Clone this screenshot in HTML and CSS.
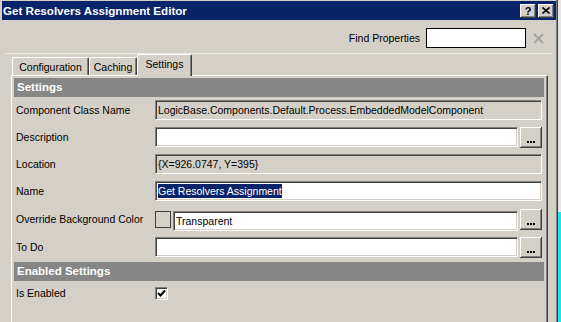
FILE: index.html
```html
<!DOCTYPE html>
<html>
<head>
<meta charset="utf-8">
<link rel="stylesheet" href="styles.css">
</head>
<body>
<div class="screen">
  <div class="window">
    <div class="titlebar">
      <span class="title">Get Resolvers Assignment Editor</span>
      <div class="tbtns">
        <span class="tbtn help">?</span>
        <span class="tbtn"><svg width="8" height="7" viewBox="0 0 8 7"><path d="M0.5 0.5 L7.5 6.5 M7.5 0.5 L0.5 6.5" stroke="#000" stroke-width="1.6" fill="none"/></svg></span>
      </div>
    </div>
    <div class="findbar">
      <span class="findlabel">Find Properties</span>
      <div class="findbox"></div>
      <svg class="clear" width="11" height="11" viewBox="0 0 11 11"><path d="M1 1 L10 10 M10 1 L1 10" stroke="#a4a4a4" stroke-width="2" fill="none"/></svg>
    </div>
    <div class="sep"></div>
    <div class="tabs">
      <div class="tab t-config">Configuration</div>
      <div class="tab t-cache">Caching</div>
      <div class="tab active">Settings</div>
    </div>
    <div class="panel">
      <div class="group">Settings</div>
      <div class="row">
        <div class="label">Component Class Name</div>
        <div class="field ro">LogicBase.Components.Default.Process.EmbeddedModelComponent</div>
      </div>
      <div class="row">
        <div class="label">Description</div>
        <div class="field"></div>
        <div class="dots"><span></span></div>
      </div>
      <div class="row">
        <div class="label">Location</div>
        <div class="field ro">{X=926.0747, Y=395}</div>
      </div>
      <div class="row">
        <div class="label">Name</div>
        <div class="field"><span class="sel">Get Resolvers Assignment</span></div>
      </div>
      <div class="row row-color">
        <div class="label">Override Background Color</div>
        <div class="swatch"></div>
        <div class="field">Transparent</div>
        <div class="dots"><span></span></div>
      </div>
      <div class="row row-todo">
        <div class="label">To Do</div>
        <div class="field"></div>
        <div class="dots"><span></span></div>
      </div>
      <div class="group">Enabled Settings</div>
      <div class="row row-check">
        <div class="label">Is Enabled</div>
        <div class="check"><svg width="9" height="9" viewBox="0 0 9 9"><path d="M1 4 L3.5 6.5 L8 1.5" stroke="#000" stroke-width="2" fill="none"/></svg></div>
      </div>
    </div>
  </div>
  <div class="edge"></div>
</div>
</body>
</html>
```
FILE: styles.css
```css
* { box-sizing: border-box; }
html, body { margin: 0; padding: 0; }
body {
  background: #d4d0c8;
  font-family: "Liberation Sans", Arial, sans-serif;
  font-size: 10.5px;
  color: #000;
  overflow: hidden;
}
.screen { display: flex; width: 561px; height: 322px; overflow: hidden; }
.window {
  width: 558px; height: 322px; flex: none;
  background: #d4d0c8;
  border-right: 1px solid #404040;
  box-shadow: inset -1px 0 #808080;
  padding: 1px 1px 0 2px;
  display: flex; flex-direction: column;
}
.edge { flex: 1; background: linear-gradient(#e6e6e6 0 212px, #22e4e4 212px); }
.titlebar {
  height: 19px; flex: none;
  background: #0a246a;
  display: flex; align-items: center; justify-content: space-between;
  padding: 0 2px 0 1px;
  color: #fff; font-weight: bold; font-size: 11.6px;
}
.tbtns { display: flex; gap: 2px; }
.tbtn {
  width: 16px; height: 14px;
  background: #d4d0c8;
  box-shadow: inset -1px -1px #404040, inset 1px 1px #fff, inset -2px -2px #808080;
  display: flex; align-items: center; justify-content: center;
  color: #000; font-size: 11px; font-weight: bold; line-height: 14px;
}
.findbar {
  height: 33px; flex: none;
  display: flex; align-items: center; justify-content: flex-end;
  padding: 3px 12px 0 0;
}
.findlabel { margin-right: 6px; }
.findbox { width: 100px; height: 20px; background: #fff; border: 1px solid #000; margin-right: 7px; }
.sep { height: 1px; flex: none; background: #eceae4; margin: 0 3px 0 3px; }
.tabs {
  height: 21px; flex: none;
  display: flex; align-items: flex-end;
  margin-left: 10px;
  position: relative; z-index: 1;
}
.tab {
  height: 18px;
  padding-top: 3px;
  text-align: center;
  border-left: 1px solid #fff; border-top: 1px solid #fff;
  border-right: 1px solid #404040;
  box-shadow: inset -1px 0 #808080;
  border-radius: 2px 2px 0 0;
}
.t-config { width: 77px; }
.t-cache { width: 48px; }
.tab.active {
  width: 55px;
  height: 22px; margin-bottom: -1px;
  padding-top: 3px;
  background: #d4d0c8;
}
.panel {
  flex: 1;
  margin-left: 9px; width: 537px;
  border-left: 1px solid #fff; border-top: 1px solid #fff;
  border-right: 1px solid #404040;
  box-shadow: inset -1px 0 #808080;
  padding: 2px 3px 0 2px;
}
.group {
  height: 19px;
  background: #868686;
  color: #fff; font-weight: bold; font-size: 11.5px;
  line-height: 19px; padding-left: 3px;
}
.row {
  height: 27px;
  display: flex; align-items: flex-start;
  padding: 3px 2px 0 0;
}
.label { width: 141px; flex: none; padding-left: 2px; line-height: 20px; }
.field {
  flex: 1; height: 20px;
  background: #fff;
  border-top: 1px solid #808080; border-left: 1px solid #808080;
  border-bottom: 1px solid #fff; border-right: 1px solid #fff;
  box-shadow: inset 1px 1px #404040, inset -1px -1px #d4d0c8;
  padding-left: 2px; line-height: 18px;
  white-space: nowrap; overflow: hidden;
}
.field.ro { background: #d4d0c8; }
.sel { background: #0a246a; color: #fff; display: inline-block; line-height: 14px; }
.dots {
  width: 22px; height: 21px; flex: none; margin-left: 2px;
  background: #d4d0c8;
  box-shadow: inset -1px -1px #404040, inset 1px 1px #fff, inset -2px -2px #808080;
  position: relative;
}
.dots span {
  position: absolute; left: 7px; bottom: 5px;
  width: 2px; height: 2px; background: #000;
  box-shadow: 3px 0 #000, 6px 0 #000;
}
.swatch {
  width: 16px; height: 17px; flex: none;
  border: 1px solid #404040; background: #d4d0c8;
  margin-right: 2px;
}
.row-color { height: 30px; padding-top: 4px; }
.row-color .field { margin-top: 2px; }
.row-color .swatch { margin-top: 2px; }
.row-todo { padding-top: 2px; }
.row-check { padding-top: 2px; }
.check {
  width: 13px; height: 13px; flex: none; margin-top: 4px;
  background: #fff;
  border-top: 1px solid #808080; border-left: 1px solid #808080;
  border-bottom: 1px solid #fff; border-right: 1px solid #fff;
  box-shadow: inset 1px 1px #404040, inset -1px -1px #d4d0c8;
  display: flex; align-items: center; justify-content: center;
}
```
